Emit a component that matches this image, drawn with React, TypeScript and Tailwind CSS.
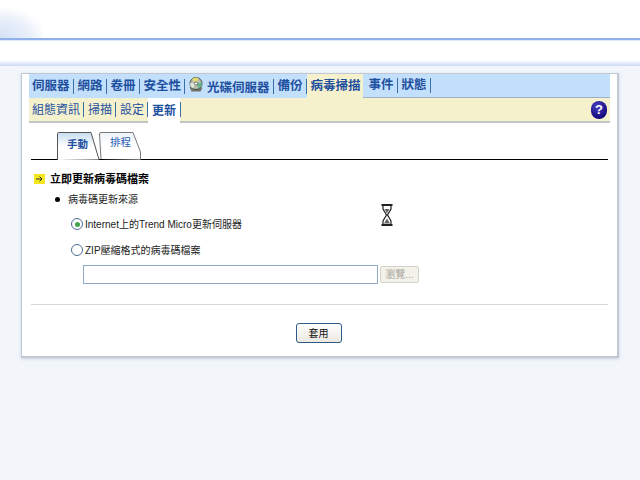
import React from "react";

const font = { fontFamily: '"Liberation Sans","Noto Sans CJK TC",sans-serif' };

function Sep() {
  return <span className="ml-[3px] mr-[4px] inline-block h-[15px] w-px bg-[#3a6ea5]" />;
}

function Main({ t }: { t: string }) {
  return <span className="text-[12.5px] font-bold text-[#1f50a0] whitespace-nowrap">{t}</span>;
}

function Sub({ t }: { t: string }) {
  return <span className="text-[12px] text-[#1f50a0] whitespace-nowrap">{t}</span>;
}

function Tab({ active, t }: { active?: boolean; t: string }) {
  return (
    <div className={active ? "relative h-[28px] w-[43px]" : "relative -ml-[1px] h-[28px] w-[43px]"}>
      <svg className="absolute left-0 top-0" width="43" height="28" viewBox="0 0 43 28">
        <defs>
          <linearGradient id={active ? "ta" : "ti"} x1="0" y1="0" x2="0" y2="1">
            <stop offset="0" stopColor={active ? "#c6dcf2" : "#eef4fa"} />
            <stop offset="0.5" stopColor="#ffffff" />
          </linearGradient>
        </defs>
        {active ? (
          <path d="M0.5 28V1.5Q0.5 0.5 1.5 0.5H34L42 27.5" fill="url(#ta)" stroke="#555" />
        ) : (
          <path d="M2 27L0.5 2Q0.5 0.5 2 0.5H34L41.5 20V27.5" fill="url(#ti)" stroke="#7a7a7a" />
        )}
      </svg>
      <span className={active ? "absolute left-[10px] top-[5px] text-[10.5px] font-bold text-[#1f50a0]" : "absolute left-[11px] top-[3px] text-[10.5px] text-[#2b5fb4]"}>{t}</span>
    </div>
  );
}

export default function App() {
  return (
    <div className="relative flex h-[480px] w-[640px] flex-col overflow-hidden bg-[#f2f6fb] text-[#222]" style={font}>
      <div className="absolute left-0 top-[8px] h-[30px] w-[44px] bg-[radial-gradient(ellipse_at_0%_100%,#d3e0f5_0%,#e8eff9_45%,#ffffff_75%)]" />
      <div className="h-[38px] shrink-0 bg-white" />
      <div className="h-[2px] shrink-0 bg-[#8fb0ea]" />
      <div className="h-[1px] shrink-0 bg-[#dde7f8]" />
      <div className="h-[19px] shrink-0 bg-white" />
      <div className="h-[6px] shrink-0 bg-gradient-to-b from-white to-[#c9d9f6]" />
      <div className="h-[7px] shrink-0" />

      <div className="mx-[21px] flex h-[285px] w-[598px] shrink-0 flex-col border border-b-2 border-r-2 border-[#c2c8d2] bg-white px-[7px] shadow-[0_1px_3px_#c8d2e0]">
        <div className="flex h-[24px] shrink-0 items-center bg-[#c2dffc]">
          <div className="flex h-full flex-1 items-center pl-[3px]">
            <Main t="伺服器" /><Sep />
            <Main t="網路" /><Sep />
            <Main t="卷冊" /><Sep />
            <Main t="安全性" /><Sep />
            <svg className="mr-[4px] mt-[-3px]" width="14" height="15" viewBox="0 0 14 15">
              <path d="M0.5 10l2 4.5h9l2-4z" fill="#70746a" />
              <circle cx="7" cy="6.5" r="6" fill="#b8bfae" stroke="#454c42" />
              <path d="M7 6.5L3 2A6 6 0 0 1 9.5 1z" fill="#e6dc72" />
              <path d="M7 6.5L12.8 5.5A6 6 0 0 1 10 11.5z" fill="#62b58c" />
              <path d="M7 6.5L3.5 11.5A6 6 0 0 1 1.2 6z" fill="#dfe6da" />
              <circle cx="7" cy="6.5" r="1.6" fill="#ffffff" stroke="#444" strokeWidth="0.7" />
            </svg>
            <span className="mt-[2px]"><Main t="光碟伺服器" /></span><Sep />
            <Main t="備份" />
            <span className="ml-[3px] inline-block h-[15px] w-px bg-[#3a6ea5]" />
            <div className="flex h-[25px] w-[56px] shrink-0 items-center self-start bg-[#f5f1cd] pl-[4px]">
              <Main t="病毒掃描" />
              <span className="ml-[3px] inline-block h-[15px] w-px bg-[#3a6ea5]" />
            </div>
            <div className="flex h-full flex-1 items-center border-b border-[#9fb0c6] pl-[6px]">
              <Main t="事件" /><Sep />
              <Main t="狀態" /><Sep />
            </div>
          </div>
        </div>
        <div className="flex h-[25px] shrink-0 items-center border-b-2 border-[#c3c6c8] bg-[#f5f1cd] pl-[3px]">
          <Sub t="組態資訊" /><Sep />
          <Sub t="掃描" /><Sep />
          <Sub t="設定" />
          <span className="ml-[3px] inline-block h-[15px] w-px bg-[#3a6ea5]" />
          <div className="flex h-[25px] w-[32px] items-center self-start bg-white pl-[4px]">
            <span className="text-[12px] font-bold text-[#1f50a0]">更新</span>
          </div>
          <span className="inline-block h-[15px] w-px bg-[#3a6ea5]" />
          <div className="flex-1" />
          <div className="mr-[3px] flex h-[18px] w-[16px] items-center justify-center rounded-full bg-[radial-gradient(circle_at_40%_30%,#4a40c0,#150a80_70%)] text-[13px] font-bold text-white">?</div>
        </div>

        <div className="ml-[2px] mr-[2px] mt-[10px] flex h-[27px] items-end border-b border-black pl-[26px]">
          <div className="-mb-px flex items-end">
            <Tab active t="手動" />
            <Tab t="排程" />
          </div>
        </div>

        <div className="mt-[12px] flex h-[14px] items-center pl-[5px]">
          <svg width="11" height="10" viewBox="0 0 11 10">
            <rect width="11" height="10" fill="#f4e61f" />
            <path d="M2 5h6M5.5 2.5L8 5 5.5 7.5" fill="none" stroke="#333" strokeWidth="1" />
          </svg>
          <span className="ml-[5px] text-[11px] font-bold text-black">立即更新病毒碼檔案</span>
        </div>
        <div className="mt-[6px] flex h-[14px] items-center pl-[26px]">
          <span className="h-[5px] w-[5px] rounded-full bg-black" />
          <span className="ml-[8px] text-[10px] text-[#222]">病毒碼更新來源</span>
        </div>
        <div className="mt-[11px] flex h-[14px] items-center pl-[42px]">
          <span className="flex h-[12px] w-[12px] items-center justify-center rounded-full border border-[#4d6d96] bg-white">
            <span className="h-[5px] w-[5px] rounded-full bg-[#3fa34d]" />
          </span>
          <span className="ml-[2px] text-[10px] text-[#222]">Internet上的Trend Micro更新伺服器</span>
        </div>
        <div className="mt-[12px] flex h-[14px] items-center pl-[42px]">
          <span className="h-[12px] w-[12px] rounded-full border border-[#4d6d96] bg-white" />
          <span className="ml-[2px] text-[10px] text-[#222]">ZIP壓縮格式的病毒碼檔案</span>
        </div>
        <div className="mt-[8px] flex items-center pl-[54px]">
          <div className="h-[19px] w-[295px] border border-[#8eaac8] bg-white" />
          <div className="ml-[2px] flex h-[17px] w-[39px] items-center justify-center rounded-[2px] border border-[#d5d3c6] bg-[#f3f2ea] text-[10px] text-[#a9a79c]">瀏覽...</div>
        </div>
        <div className="ml-[2px] mr-[2px] mt-[20px] h-px bg-[#d6d6d6]" />
        <div className="mt-[18px] flex justify-center pr-[2px]">
          <div className="flex h-[20px] w-[46px] items-center justify-center rounded-[3px] border border-[#2c5a8a] bg-gradient-to-b from-white to-[#ebe9e0] text-[10px] text-[#111]">套用</div>
        </div>
      </div>

      <svg className="absolute left-[381px] top-[204px]" width="12" height="22" viewBox="0 0 12 22">
        <path d="M0.5 1h11M0.5 21h11" stroke="#222" strokeWidth="2" />
        <path d="M2 2v3l3.5 6L2 17v3M10 2v3l-3.5 6 3.5 6v3" fill="#fff" stroke="#222" strokeWidth="1.2" />
        <path d="M3.5 5h5L6 9.5zM3 19.5l3-5 3 5z" fill="#666" />
      </svg>
    </div>
  );
}
